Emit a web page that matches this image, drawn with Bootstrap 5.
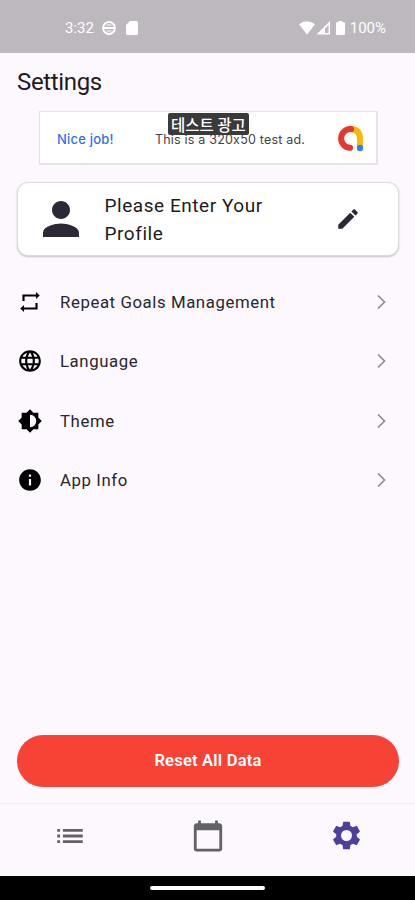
<!DOCTYPE html>
<html lang="en">
<head>
<meta charset="utf-8">
<meta name="viewport" content="width=device-width, initial-scale=1">
<title>Settings</title>
<link href="https://cdn.jsdelivr.net/npm/bootstrap@5.3.0/dist/css/bootstrap.min.css" rel="stylesheet">
<style>
body{font-family:Roboto,"Noto Sans CJK KR",sans-serif;background:#fdf7fe;color:#1d1b20;height:900px;overflow:hidden}
svg{display:block;fill:currentColor;flex:none}
.status-bar{height:52.5px;background:#bdb7be;color:#fff;padding:4px 29px 0 65px;font-size:15px}
.status-bar .sd-icon{margin-left:10px}
.status-bar .signal-icon{margin-left:1px}
.status-bar .battery-icon{margin:0 5px 0 6px}
.page-title{font-size:24px;line-height:30px;margin:14.5px 0 0 17px;letter-spacing:-.35px}
.ad-box{width:339px;height:54px;margin:14px 0 0 39px;border:1px solid #e6e2e8;border-width:1px 2px 2px 1px;background:#fff;padding:2px 12px 0 17px;font-family:Inter,sans-serif;font-size:13px}
.ad-cta{color:#2f73e8;width:98px;font-weight:500;letter-spacing:.2px;padding-top:2px}
.ad-copy{color:#444;font-size:12.5px;letter-spacing:.2px;padding-top:3px}
.ad-label{top:1px;left:128px;width:81px;height:22px;border-radius:2px;background:#3a3a3a;color:#fff;font:500 15.5px/22px "Noto Sans CJK KR",sans-serif}
.profile-card{height:74px;margin:17.4px 16px 0 17px;border:1px solid #dedade;border-radius:11px;background:#fff;box-shadow:0 1px 2px rgba(0,0,0,.22);padding:0 37px 0 15.5px;color:#2c2838}
.profile-text{color:#1d1b20;font-size:19px;line-height:28.5px;letter-spacing:.55px;margin-left:17px;padding-top:2px}
.menu-rows{margin-top:16.6px}
.menu-row{height:59.3px;padding:0 27px 0 17px;color:#000}
.menu-row svg{margin-bottom:1px}
.menu-row span{font-size:16.8px;letter-spacing:.58px;margin-left:17px;color:#29272c}
.chev{stroke:#8f8b92;stroke-width:1.7;fill:none}
.reset-btn{height:52px;margin:0 16px 16px 17px;padding-top:8px;background:#f64336;color:#fff;font-size:16.5px;font-weight:600;letter-spacing:.22px}
.tab-bar{height:73px;border-top:1px solid #f0ebf2;color:#656168;padding:0 0 8px 1px}
.tab-bar .current{color:#4f3f9c}
.home-strip{height:24.5px;background:#000}
.home-strip div{width:115px;height:4.5px;background:#fff}
</style>
<script src="https://cdn.jsdelivr.net/npm/bootstrap@5.3.0/dist/js/bootstrap.bundle.min.js"></script>
</head>
<body class="d-flex flex-column">
<header class="status-bar d-flex align-items-center flex-shrink-0">
  <span>3:32</span>
  <svg class="ms-2" width="14" height="14" viewBox="0 0 14 14"><circle cx="7" cy="7" r="5.9" fill="none" stroke="#fff" stroke-width="2"/><path d="M1 6h12v2H1zM4.5 3.5h5v1h-5zM4.5 9.5h5v1h-5z"/></svg>
  <svg class="sd-icon" width="12" height="14" viewBox="0 0 12 14"><path d="M4 0h6.500Q12 0 12 1.500v11q0 1.500-1.500 1.500h-9Q0 14 0 12.500V4z"/></svg>
  <svg class="ms-auto" width="16" height="14" viewBox="0 0 16 14"><path d="M8 13.500L0 3.200Q8-2.800 16 3.200z"/></svg>
  <svg class="signal-icon" width="14" height="14" viewBox="0 0 14 14"><path fill-rule="evenodd" d="M14 0v13.500H.5zM12.600 4L9 7.600v4.500h3.600z"/></svg>
  <svg class="battery-icon" width="9" height="14" viewBox="0 0 9 14"><path d="M2.500 0h4v1.300H8q1 0 1 1V13q0 1-1 1H1q-1 0-1-1V2.300q0-1 1-1h1.500z"/></svg>
  <span>100%</span>
</header>
<main class="d-flex flex-column flex-grow-1">
  <h1 class="page-title fw-normal">Settings</h1>
  <div class="ad-box d-flex align-items-center position-relative">
    <span class="ad-cta">Nice job!</span>
    <span class="ad-copy text-nowrap">This is a 320x50 test ad.</span>
    <svg class="ms-auto" width="27" height="27" viewBox="0 0 27 27" fill="none" stroke-width="6" stroke-linecap="round"><path d="M13 4Q23 4 23 14v7" stroke="#fbb80b" fill="none"/><path d="M14 4a9.400 9.400 0 0 0-1 18.800" stroke="#e5382c" fill="none"/><circle cx="23" cy="23" r="3.200" fill="#2f80ed"/></svg>
    <span class="ad-label position-absolute text-center text-nowrap">테스트 광고</span>
  </div>
  <section class="profile-card d-flex align-items-center">
    <svg width="54" height="54" viewBox="0 0 24 24"><path d="M12 12c2.210 0 4-1.790 4-4s-1.790-4-4-4-4 1.790-4 4 1.790 4 4 4zm0 2c-2.670 0-8 1.340-8 4v2h16v-2c0-2.660-5.330-4-8-4z"/></svg>
    <div class="profile-text">Please Enter Your<br>Profile</div>
    <svg class="ms-auto" width="26" height="26" viewBox="0 0 24 24"><path d="M3 17.250V21h3.750L17.810 9.940l-3.750-3.750L3 17.250zM20.710 7.040c.39-.39.39-1.020 0-1.410l-2.340-2.340c-.39-.39-1.020-.39-1.410 0l-1.830 1.830 3.750 3.750 1.830-1.830z"/></svg>
  </section>
  <nav class="menu-rows">
    <div class="menu-row d-flex align-items-center">
      <svg width="26" height="26" viewBox="0 0 24 24"><path d="M7 7h10.500v2.300L21 6l-3.500-3.300V5H5v6h2zm10 10H6.500v-2.300L3 18l3.500 3.300V19H19v-6h-2z"/></svg>
      <span>Repeat Goals Management</span>
      <svg class="chev ms-auto" width="14" height="16" viewBox="0 0 14 16"><path d="M4 1.500L10.500 8 4 14.500"/></svg>
    </div>
    <div class="menu-row d-flex align-items-center">
      <svg width="26" height="26" viewBox="0 0 24 24"><path d="M11.990 2C6.470 2 2 6.480 2 12s4.470 10 9.990 10C17.520 22 22 17.520 22 12S17.520 2 11.990 2zm6.930 6h-2.950c-.32-1.250-.78-2.450-1.380-3.560 1.840.63 3.370 1.910 4.330 3.560zM12 4.040c.83 1.200 1.480 2.530 1.910 3.960h-3.820c.43-1.430 1.080-2.760 1.910-3.960zM4.260 14C4.100 13.360 4 12.690 4 12s.1-1.360.26-2h3.380c-.08.66-.14 1.320-.14 2s.06 1.340.14 2H4.260zm.82 2h2.950c.32 1.250.78 2.450 1.380 3.560-1.840-.63-3.370-1.900-4.330-3.560zm2.950-8H5.080c.96-1.660 2.490-2.930 4.330-3.560C8.810 5.550 8.350 6.750 8.030 8zM12 19.960c-.83-1.200-1.480-2.530-1.910-3.960h3.820c-.43 1.430-1.080 2.760-1.910 3.960zM14.340 14H9.660c-.09-.66-.16-1.320-.16-2s.07-1.350.16-2h4.680c.09.65.16 1.320.16 2s-.07 1.340-.16 2zm.25 5.560c.6-1.110 1.060-2.310 1.380-3.560h2.950c-.96 1.650-2.490 2.930-4.330 3.560zM16.360 14c.08-.66.14-1.320.14-2s-.06-1.340-.14-2h3.380c.16.64.26 1.310.26 2s-.1 1.360-.26 2h-3.380z"/></svg>
      <span>Language</span>
      <svg class="chev ms-auto" width="14" height="16" viewBox="0 0 14 16"><path d="M4 1.500L10.500 8 4 14.500"/></svg>
    </div>
    <div class="menu-row d-flex align-items-center">
      <svg width="26" height="26" viewBox="-.5 -.5 25 25"><path d="M20 15.310L23.310 12 20 8.690V4h-4.690L12 .69 8.690 4H4v4.690L.69 12 4 15.310V20h4.690L12 23.310 15.310 20H20v-4.690zM12 18V6c3.310 0 6 2.690 6 6s-2.690 6-6 6z"/></svg>
      <span>Theme</span>
      <svg class="chev ms-auto" width="14" height="16" viewBox="0 0 14 16"><path d="M4 1.500L10.500 8 4 14.500"/></svg>
    </div>
    <div class="menu-row d-flex align-items-center">
      <svg width="26" height="26" viewBox="0 0 24 24"><path d="M12 2C6.480 2 2 6.480 2 12s4.480 10 10 10 10-4.480 10-10S17.520 2 12 2zm1 15h-2v-6h2v6zm0-8h-2V7h2v2z"/></svg>
      <span>App Info</span>
      <svg class="chev ms-auto" width="14" height="16" viewBox="0 0 14 16"><path d="M4 1.500L10.500 8 4 14.500"/></svg>
    </div>
  </nav>
  <button class="reset-btn btn rounded-pill border-0 mt-auto">Reset All Data</button>
</main>
<nav class="tab-bar row g-0 align-items-center flex-shrink-0">
  <div class="col d-flex justify-content-center"><svg width="34" height="34" viewBox="0 0 24 24"><path d="M3 13h2v-2H3v2zm0 4h2v-2H3v2zm0-8h2V7H3v2zm4 4h14v-2H7v2zm0 4h14v-2H7v2zM7 7v2h14V7H7z"/></svg></div>
  <div class="col d-flex justify-content-center"><svg width="34" height="34" viewBox="0 0 24 24"><path d="M20 3h-1V1h-2v2H7V1H5v2H4c-1.100 0-2 .9-2 2v16c0 1.100.9 2 2 2h16c1.100 0 2-.9 2-2V5c0-1.100-.9-2-2-2zm0 18H4V8h16v13z"/></svg></div>
  <div class="col d-flex justify-content-center current"><svg width="33" height="33" viewBox="0 0 24 24"><path fill-rule="evenodd" d="M19.430 12.980c.04-.32.07-.64.07-.98s-.03-.66-.07-.98l2.110-1.650c.19-.15.24-.42.12-.64l-2-3.460c-.12-.22-.39-.3-.61-.22l-2.490 1c-.52-.4-1.080-.73-1.690-.98l-.38-2.650C14.460 2.180 14.250 2 14 2h-4c-.25 0-.46.18-.49.42l-.38 2.650c-.61.25-1.170.59-1.690.98l-2.490-1c-.23-.09-.49 0-.61.22l-2 3.460c-.13.22-.07.49.12.64l2.110 1.650c-.04.32-.07.65-.07.98s.03.66.07.98l-2.110 1.650c-.19.15-.24.42-.12.64l2 3.460c.12.22.39.3.61.22l2.490-1c.52.4 1.080.73 1.690.98l.38 2.650c.03.24.24.42.49.42h4c.25 0 .46-.18.49-.42l.38-2.650c.61-.25 1.170-.59 1.690-.98l2.490 1c.23.09.49 0 .61-.22l2-3.460c.12-.22.07-.49-.12-.64l-2.110-1.650zM12 16a4 4 0 1 1 0-8 4 4 0 0 1 0 8z"/></svg></div>
</nav>
<footer class="home-strip d-flex justify-content-center align-items-center flex-shrink-0"><div class="rounded-pill"></div></footer>
</body>
</html>
